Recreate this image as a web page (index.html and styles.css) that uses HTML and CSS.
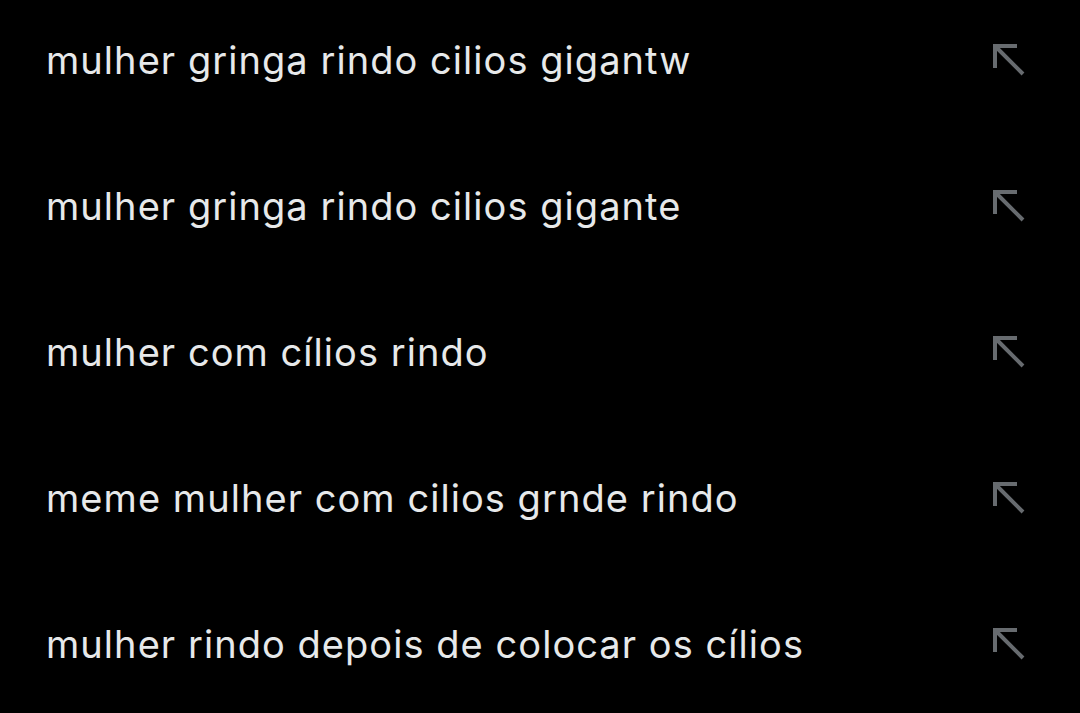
FILE: index.html
```html
<!DOCTYPE html>
<html lang="pt">
<head>
    <meta charset="UTF-8">
    <meta name="viewport" content="width=device-width, initial-scale=1.0">
    <title>Pesquisas recentes</title>
    <link rel="stylesheet" href="styles.css">
</head>
<body>
    <ul class="suggestions">
        <li class="suggestion">
            <span class="query">mulher gringa rindo cilios gigantw</span>
            <svg class="fill-arrow" viewBox="0 0 32 32"><path d="M2 24V2H24M2 2L30 30"/></svg>
        </li>
        <li class="suggestion">
            <span class="query">mulher gringa rindo cilios gigante</span>
            <svg class="fill-arrow" viewBox="0 0 32 32"><path d="M2 24V2H24M2 2L30 30"/></svg>
        </li>
        <li class="suggestion">
            <span class="query">mulher com cílios rindo</span>
            <svg class="fill-arrow" viewBox="0 0 32 32"><path d="M2 24V2H24M2 2L30 30"/></svg>
        </li>
        <li class="suggestion">
            <span class="query">meme mulher com cilios grnde rindo</span>
            <svg class="fill-arrow" viewBox="0 0 32 32"><path d="M2 24V2H24M2 2L30 30"/></svg>
        </li>
        <li class="suggestion">
            <span class="query">mulher rindo depois de colocar os cílios</span>
            <svg class="fill-arrow" viewBox="0 0 32 32"><path d="M2 24V2H24M2 2L30 30"/></svg>
        </li>
    </ul>
</body>
</html>
```
FILE: styles.css
```css
body {
    margin: 0;
    padding: 0;
    background-color: #000;
    color: #e7e9ea;
    font-family: Inter, "Noto Sans", sans-serif;
    overflow: hidden;
}
.suggestions {
    list-style: none;
    margin: -13px 0 0 0; /* liste déjà défilée */
    padding: 0;
}
.suggestion {
    display: flex;
    align-items: center;
    justify-content: space-between;
    height: 146px;
    padding: 0 55px 0 46px;
}
.query {
    font-size: 38px;
    letter-spacing: 1.05px;
}
.fill-arrow {
    width: 32px;
    height: 32px;
    fill: none;
    stroke: #676b6f;
    stroke-width: 4;
}
```
